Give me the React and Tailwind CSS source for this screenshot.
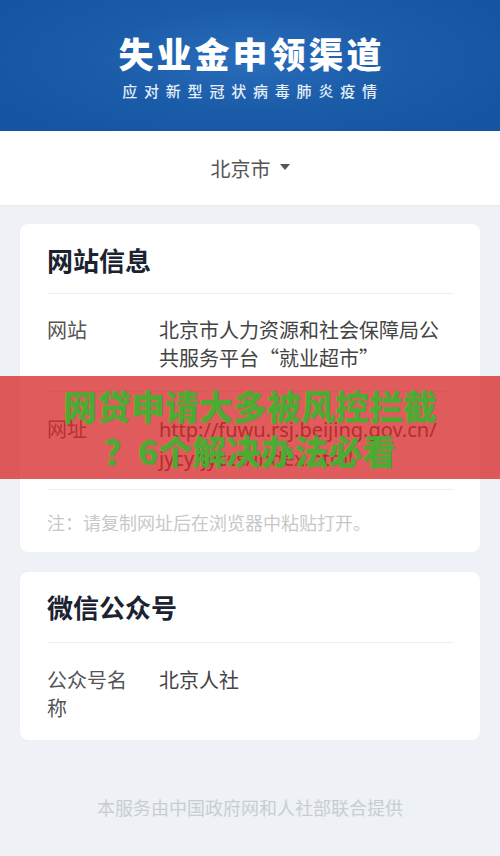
import React from "react";

const font = { fontFamily: '"Noto Sans CJK SC", "Noto Sans", sans-serif' };

function Row({ label, children, pad }) {
  return (
    <div className={`flex border-b border-[#eceef1] ${pad}`}>
      <div className="w-[112px] shrink-0 text-[20px] leading-[28px] text-[#555]">{label}</div>
      <div className="flex-1 text-[20px] leading-[28px] text-[#444]">{children}</div>
    </div>
  );
}

export default function App() {
  return (
    <div className="relative w-[500px] h-[856px] bg-[#eef2f6] overflow-hidden" style={font}>
      <div className="h-[131px] bg-[radial-gradient(ellipse_55%_70%_at_50%_45%,#2a6dbb_0%,#1a5ca8_55%,#1456a3_100%)] flex flex-col items-center pt-[30px]">
        <div className="text-white text-[35px] font-black leading-[46px] tracking-[3px] pl-[3px]">失业金申领渠道</div>
        <div className="text-[#e4eef9] text-[15px] font-medium leading-[22px] tracking-[6.8px] pl-[6px] mt-[4px]">应对新型冠状病毒肺炎疫情</div>
      </div>
      <div className="h-[74px] bg-white flex items-center justify-center pt-[1px] shadow-[0_1px_3px_rgba(0,0,0,0.04)]">
        <span className="text-[20px] text-[#555] leading-[28px]">北京市</span>
        <svg width="10" height="7" viewBox="0 0 10 7" className="ml-[9px] mt-[-2px]">
          <path d="M0 0 L10 0 L5 6 Z" fill="#555" />
        </svg>
      </div>

      <div className="px-[20px] pt-[19px] flex flex-col gap-[20px]">
        <div className="bg-white rounded-[8px] px-[27px] pt-[18px] pb-[18px] shadow-[0_0_2px_rgba(0,0,0,0.04)]">
          <div className="text-[26px] leading-[36px] font-bold text-[#1b2230] pb-[15px] border-b border-[#eceef1]">网站信息</div>
          <Row label="网站" pad="pt-[22px] pb-[19px]">北京市人力资源和社会保障局公共服务平台“就业超市”</Row>
          <Row label="网址" pad="pt-[23px] pb-[16px]">
            <span style={{ fontFamily: '"Noto Sans", sans-serif' }}>
              http://fuwu.rsj.beijing.gov.cn/<wbr />jycy/jyccs/index.html
            </span>
          </Row>
          <div className="pt-[20px] text-[18px] leading-[24px] text-[#c8c8c8]">注：请复制网址后在浏览器中粘贴打开。</div>
        </div>

        <div className="bg-white rounded-[8px] px-[27px] pt-[17px] pb-[18px] shadow-[0_0_2px_rgba(0,0,0,0.04)]">
          <div className="text-[26px] leading-[36px] font-bold text-[#1b2230] pb-[17px] border-b border-[#eceef1]">微信公众号</div>
          <div className="flex pt-[23px]">
            <div className="w-[112px] shrink-0 text-[20px] leading-[28px] text-[#555] pr-[20px]">公众号名称</div>
            <div className="flex-1 text-[20px] leading-[28px] text-[#444]">北京人社</div>
          </div>
        </div>
      </div>

      <div className="text-center text-[18px] leading-[24px] text-[#c9cdd2] mt-[55px]">本服务由中国政府网和人社部联合提供</div>

      <div className="absolute left-0 right-0 top-[376px] h-[103px] bg-[rgba(214,40,40,0.76)] flex flex-col items-center justify-center">
        <div className="text-[#4cab33] text-[34px] font-black leading-[45px] text-center whitespace-nowrap">
          网贷申请大多被风控拦截
          <br />
          ？6个解决办法必看
        </div>
      </div>
    </div>
  );
}
